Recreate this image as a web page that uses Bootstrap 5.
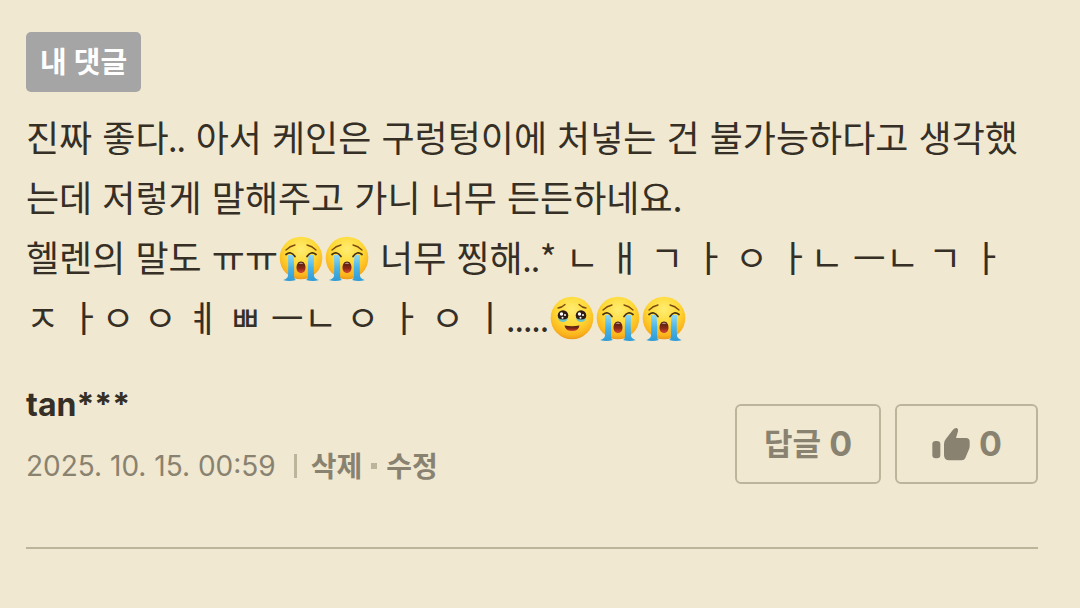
<!DOCTYPE html>
<html lang="ko">
<head>
<meta charset="utf-8">
<meta name="viewport" content="width=device-width, initial-scale=1">
<title>내 댓글</title>
<link href="https://cdn.jsdelivr.net/npm/bootstrap@5.3.0/dist/css/bootstrap.min.css" rel="stylesheet">
<style>
  :root { --paper: #f0e8d1; --ink: #352f26; --muted-ink: #898270; --rule: #bdb49c; }
  body { background: var(--paper); color: var(--ink); font-family: "Noto Sans CJK KR", sans-serif; }
  .comment { margin: 0 42px 0 26px; padding: 32px 0 60px; border-bottom: 2px solid var(--rule); }
  .mine-tag { background: #a5a5a5; font-size: 29px; line-height: 60px; padding: 0 14px; border-radius: 5px; }
  .comment-text { font-size: 36px; line-height: 60px; margin-top: 14px; margin-bottom: 34px; word-break: break-all; }
  .mine-tag, .narrow { font-family: Lato, "Noto Sans CJK KR", sans-serif; }
  .narrow { line-height: 40px; }
  .emoji { width: 44px; height: 46px; margin: 0 1px; vertical-align: -10px; }
  .author { font-family: Inter, sans-serif; font-size: 32px; line-height: 50px; }
  .meta { font-size: 28px; line-height: 40px; margin-top: 15px; color: var(--muted-ink); }
  .meta time { font-family: Inter, sans-serif; }
  .meta a { color: inherit; padding-bottom: 2px; }
  .bar { width: 3px; height: 24px; background: var(--rule); margin: 0 14px 0 18px; }
  .dot { width: 6px; height: 6px; background: var(--rule); margin: 0 9px; }
  .btn-react { --bs-btn-color: var(--muted-ink); --bs-btn-border-color: var(--rule); --bs-btn-border-width: 2px;
    --bs-btn-hover-color: var(--ink); --bs-btn-hover-border-color: var(--muted-ink);
    --bs-btn-border-radius: 6px; --bs-btn-font-size: 31px; --bs-btn-line-height: 40px; --bs-btn-font-weight: 700;
    --bs-btn-padding-y: 18px; --bs-btn-padding-x: 27px; }
  .btn-like { --bs-btn-padding-x: 34px; }
  .reply-label { line-height: 36px; padding-bottom: 4px; }
  .count { font-family: Inter, sans-serif; font-size: 34px; }
  .reactions { gap: 14px; margin-top: 24px; }
</style>
</head>
<body>
<svg class="position-absolute" width="0" height="0" aria-hidden="true">
  <defs>
    <radialGradient id="face" cx=".5" cy=".3" r=".72"><stop offset="0" stop-color="#ffed72"/><stop offset=".5" stop-color="#ffd936"/><stop offset=".85" stop-color="#fbb31c"/><stop offset="1" stop-color="#e8921a"/></radialGradient>
    <linearGradient id="tear" x1="0" y1="0" x2="0" y2="1"><stop offset="0" stop-color="#8ed8f4"/><stop offset=".5" stop-color="#49b4e6"/><stop offset="1" stop-color="#2f9bd6"/></linearGradient>
    <linearGradient id="mouth" x1="0" y1="0" x2="0" y2="1"><stop offset="0" stop-color="#4a1c10"/><stop offset=".6" stop-color="#8b2a17"/><stop offset="1" stop-color="#dd4a35"/></linearGradient>
    <symbol id="sob" viewBox="0 0 44 46">
      <circle cx="22" cy="22" r="21.3" fill="url(#face)"/>
      <path d="M7 14q4-4 9-5M37 14q-4-4-9-5" fill="none" stroke="#7a4a12" stroke-width="1.3" stroke-linecap="round"/>
      <path d="M9 19h5.500q1 12 .5 21q0 3 2 4q-7 2-13 0q4-1 5-4q.5-10 0-21zM35 19h-5.500q-1 12-.5 21q0 3-2 4q7 2 13 0q-4-1-5-4q-.5-10 0-21z" fill="url(#tear)"/>
      <path d="M7 18.500q5-4 9 2M37 18.500q-5-4-9 2" fill="none" stroke="#4a3210" stroke-width="1.700" stroke-linecap="round"/>
      <path d="M22 25.500c3 0 4.500 3 4.500 6s-1.500 5.500-4.500 5.500s-4.500-2.500-4.500-5.500s1.500-6 4.500-6z" fill="url(#mouth)"/>
      <path d="M19.500 27.500q2.500-1.500 5 0z" fill="#fff"/>
    </symbol>
    <symbol id="moved" viewBox="0 0 44 46">
      <circle cx="22" cy="22" r="21.3" fill="url(#face)"/>
      <path d="M8 12q4-.5 7-3.500M36 12q-4-.5-7-3.500" fill="none" stroke="#7a4a12" stroke-width="1.3" stroke-linecap="round"/>
      <ellipse cx="13" cy="19.500" rx="5.300" ry="5.200" fill="#2e1c12"/><ellipse cx="31" cy="19.500" rx="5.300" ry="5.200" fill="#2e1c12"/>
      <path d="M8 22q5 3 10 0q-1 4-5 4t-5-4zM26 22q5 3 10 0q-1 4-5 4t-5-4z" fill="#6fc5c8"/>
      <g fill="#fff"><circle cx="11.500" cy="18" r="1.700"/><circle cx="15" cy="19" r="1"/><circle cx="12.500" cy="21.700" r="1"/><circle cx="29.500" cy="18" r="1.700"/><circle cx="33" cy="19" r="1"/><circle cx="30.500" cy="21.700" r="1"/></g>
      <path d="M14.500 29.500q7.500 1.500 15 0q-1 5.500-7.500 5.500t-7.500-5.500z" fill="url(#mouth)"/>
    </symbol>
  </defs>
</svg>

<main>
  <article class="comment">
    <div class="d-flex"><span class="mine-tag text-white fw-bold">내 댓글</span></div>
    <p class="comment-text">진짜 좋다<span class="narrow">..</span> 아서 케인은 구렁텅이에 처넣는 건 불가능하다고 생각했는데 저렇게 말해주고 가니 너무 든든하네요.<br>
      헬렌의 말도 ㅠㅠ<svg class="emoji" role="img" aria-label="엉엉 우는 얼굴"><use href="#sob"/></svg><svg class="emoji" role="img" aria-label="엉엉 우는 얼굴"><use href="#sob"/></svg> 너무 찡해<span class="narrow">..</span>*<span class="narrow"> ㄴ ㅐ ㄱ ㅏ ㅇ ㅏㄴ ㅡㄴ ㄱ ㅏ ㅈ ㅏㅇ ㅇ ㅖ ㅃ ㅡㄴ ㅇ ㅏ ㅇ ㅣ.....</span><svg class="emoji" role="img" aria-label="눈물을 참는 얼굴"><use href="#moved"/></svg><svg class="emoji" role="img" aria-label="엉엉 우는 얼굴"><use href="#sob"/></svg><svg class="emoji" role="img" aria-label="엉엉 우는 얼굴"><use href="#sob"/></svg></p>
    <div class="d-flex flex-wrap justify-content-between align-items-start">
      <div>
        <div class="author fw-bold">tan***</div>
        <div class="meta d-flex align-items-center">
          <time datetime="2025-10-15T00:59">2025. 10. 15. 00:59</time>
          <span class="bar"></span>
          <a href="#" class="fw-bold text-decoration-none">삭제</a>
          <span class="dot"></span>
          <a href="#" class="fw-bold text-decoration-none">수정</a>
        </div>
      </div>
      <div class="reactions d-flex">
        <button type="button" class="btn btn-react d-flex align-items-center gap-2"><span class="reply-label">답글</span> <span class="count">0</span></button>
        <button type="button" class="btn btn-react btn-like d-flex align-items-center" aria-label="좋아요 0">
          <svg class="me-2" width="40" height="34" viewBox="0 0 120 102" fill="currentColor" aria-hidden="true"><rect x="4" y="42" width="24" height="52" rx="10"/><path d="M39 50q0-8 6-15L66 8q5-6 11-5q6 2 4 10l-6 20h30q11 0 11 11v14q0 5-2 9l-11 26q-3 7-11 7H55q-16 0-16-16z"/></svg>
          <span class="count">0</span>
        </button>
      </div>
    </div>
  </article>
</main>
<script src="https://cdn.jsdelivr.net/npm/bootstrap@5.3.0/dist/js/bootstrap.bundle.min.js"></script>
</body>
</html>
